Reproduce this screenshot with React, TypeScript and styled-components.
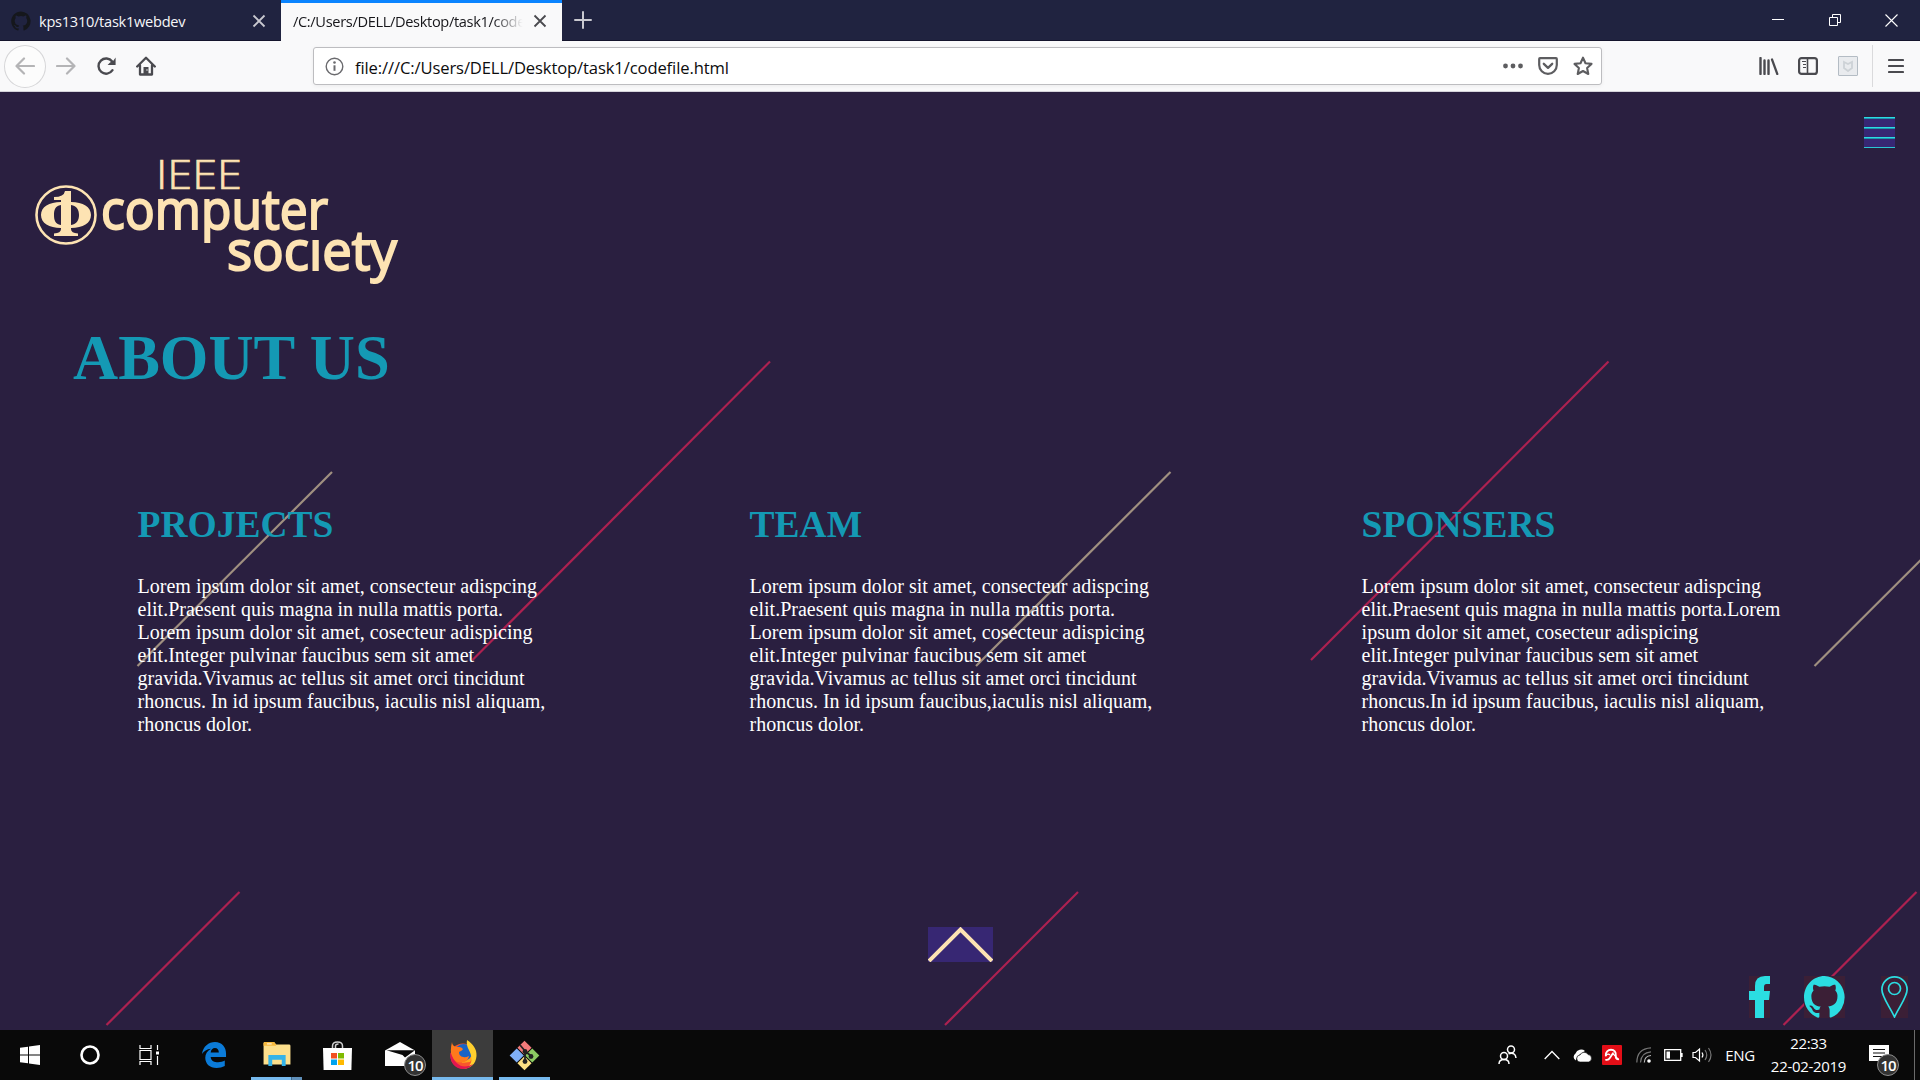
import React from "react";
import styled, { createGlobalStyle, css } from "styled-components";

const ui = `"Open Sans", "Noto Sans", sans-serif`;
const serif = `"Liberation Serif", "Times New Roman", serif`;

const Global = createGlobalStyle`
  * { box-sizing: border-box; }
  html, body { margin: 0; padding: 0; }
  body { width: 1920px; height: 1080px; overflow: hidden; background: #2a1f40; }
  svg { display: block; flex: none; }
`;

const Screen = styled.div`
  width: 1920px;
  height: 1080px;
  display: flex;
  flex-direction: column;
  font-family: ${ui};
`;

/* ---------- browser chrome ---------- */
const TabBar = styled.header`
  height: 41px;
  flex: none;
  display: flex;
  background: #202340;
  border-bottom: 1px solid #14142c;
`;

const Tab = styled.div<{ $active?: boolean }>`
  width: 281px;
  height: 41px;
  display: flex;
  align-items: center;
  padding: 0 15px 0 11px;
  font-size: 14.6px;
  color: #f6f6f8;
  ${(p) =>
    p.$active &&
    css`
      background: #f9f9fa;
      border-top: 3px solid #0a84ff;
      color: #16161a;
      padding-bottom: 3px;
      padding-left: 12px;
    `}
`;

const TabLabel = styled.span<{ $spacing: number; $fade?: boolean }>`
  flex: 1;
  overflow: hidden;
  white-space: nowrap;
  line-height: 22px;
  letter-spacing: ${(p) => p.$spacing}px;
  margin-left: ${(p) => (p.$fade ? 0 : 8)}px;
  margin-right: ${(p) => (p.$fade ? 8 : 0)}px;
  ${(p) =>
    p.$fade &&
    css`
      mask-image: linear-gradient(to right, #000 86%, transparent 99%);
    `}
`;

const NewTab = styled.div`
  display: flex;
  align-items: center;
  padding-left: 12px;
`;

const WindowButtons = styled.div`
  margin-left: auto;
  display: flex;
  align-items: center;
`;

const WindowButton = styled.div`
  width: 57px;
  height: 40px;
  display: flex;
  align-items: center;
  justify-content: center;
`;

const Toolbar = styled.div`
  height: 51px;
  flex: none;
  display: flex;
  align-items: center;
  background: #f9f9fa;
  border-bottom: 1px solid #d5d2da;
  padding: 0 13px 0 4px;
`;

const BackButton = styled.div`
  width: 42px;
  height: 43px;
  border: 1px solid #d6d6d8;
  border-radius: 50%;
  background: #fcfcfc;
  display: flex;
  align-items: center;
  justify-content: center;
`;

const NavIcons = styled.div`
  display: flex;
  align-items: center;
  gap: 20px;
  margin-left: 10px;
`;

const UrlBox = styled.div`
  width: 1289px;
  height: 38px;
  margin-left: 157px;
  border: 1px solid #bdbdc0;
  border-radius: 3px;
  background: #fff;
  box-shadow: 0 1px 4px rgba(0, 0, 0, 0.06);
  display: flex;
  align-items: center;
  padding: 0 8px 0 11px;
`;

const UrlText = styled.span`
  flex: 1;
  margin-left: 11px;
  font-size: 16.6px;
  letter-spacing: -0.12px;
  color: #0c0c0d;
  line-height: 24px;
  padding-top: 3px;
`;

const UrlActions = styled.div`
  display: flex;
  align-items: center;
  gap: 15px;
`;

const ToolbarEnd = styled.div`
  margin-left: auto;
  display: flex;
  align-items: center;
  gap: 19px;
`;

const Extension = styled.div`
  width: 20px;
  height: 20px;
  margin-left: 1px;
  border: 1px solid #b4bcc4;
  border-radius: 1px;
  background: #e9ebee;
  display: flex;
  align-items: center;
  justify-content: center;
`;

const AppMenu = styled.div`
  height: 42px;
  margin-left: -5px;
  padding: 0 3px 0 15px;
  border-left: 1px solid #dadadc;
  display: flex;
  align-items: center;
`;

/* ---------- page ---------- */
const Page = styled.main`
  position: relative;
  isolation: isolate;
  flex: 1;
  background: #2a1f40;
  display: flex;
  flex-direction: column;
`;

const Streaks = styled.svg`
  position: absolute;
  inset: 0;
  z-index: -1;
`;

const PageTop = styled.div`
  display: flex;
  justify-content: space-between;
  align-items: flex-start;
  padding: 25px 25px 0 35px;
  height: 198px;
`;

const Logo = styled.svg`
  margin-top: 42px;
  overflow: visible;
`;

const MenuButton = styled.div`
  width: 31px;
  height: 31px;
  background: #372773;
  display: flex;
  flex-direction: column;
  gap: 8px;
`;

const MenuBar = styled.div<{ $thin?: boolean }>`
  height: ${(p) => (p.$thin ? 1 : 2)}px;
  background: ${(p) => (p.$thin ? "#2bc6d2" : "linear-gradient(#2bdde2 50%, #1f95ae 50%)")};
`;

const Title = styled.h1`
  margin: 32px 0 0 73px;
  font: bold 62.5px/72px ${serif};
  color: #1499b4;
`;

const Columns = styled.section`
  display: grid;
  grid-template-columns: 612px 612px 1fr;
  padding-left: 137.6px;
  margin-top: 108px;
`;

const Column = styled.article`
  color: #fff;
  font: 20px/23px ${serif};
`;

const ColumnTitle = styled.h2`
  margin: 0;
  font: bold 37.5px/46px ${serif};
  color: #1499b4;
`;

const ColumnText = styled.p`
  margin: 27px 0 0;
  white-space: pre-line;
`;

const PageBottom = styled.div`
  margin-top: auto;
  display: grid;
  grid-template-columns: 928px 1fr auto;
  height: 103px;
  padding-right: 12px;
`;

const UpButton = styled.div`
  grid-column: 2;
  width: 65px;
  height: 35px;
  background: #372773;
`;

const Social = styled.div`
  display: flex;
  align-items: flex-start;
  margin-top: 49px;
`;

const SocialIcon = styled.div<{ $w: number; $gap: number }>`
  width: ${(p) => p.$w}px;
  height: 42px;
  margin-right: ${(p) => p.$gap}px;
  background: #3b1f36;
`;

/* ---------- taskbar ---------- */
const Taskbar = styled.footer`
  height: 50px;
  flex: none;
  display: flex;
  background: #090909;
  color: #fff;
`;

const TaskItem = styled.div<{ $w?: number; $active?: boolean; $line?: boolean }>`
  width: ${(p) => p.$w ?? 62}px;
  height: 50px;
  display: flex;
  align-items: center;
  justify-content: center;
  ${(p) => p.$active && "background: #3c3c3c;"}
  ${(p) => p.$line && "border-bottom: 3px solid #76b9ed; padding-top: 3px;"}
`;

const ExplorerItem = styled(TaskItem)`
  margin-left: 2px;
  border-image: linear-gradient(to right, #76b9ed 78%, #41678a 78%, #41678a 80%, #5f8fb9 80%) 1;
  border-style: solid;
  border-width: 0 0 3px;
`;

const MailItem = styled(TaskItem)`
  padding: 0 5px 2px 0;
`;

const Badged = styled.div`
  position: relative;
`;

const Badge = styled.span<{ $x: number; $y: number }>`
  position: absolute;
  left: ${(p) => p.$x}px;
  top: ${(p) => p.$y}px;
  width: 22px;
  height: 22px;
  border: 1px solid #8c8c8c;
  border-radius: 50%;
  background: #333;
  font-size: 15px;
  font-weight: 600;
  line-height: 20px;
  text-align: center;
  letter-spacing: -1px;
`;

const Tray = styled.div`
  margin-left: auto;
  display: flex;
  align-items: center;
`;

const TrayIcon = styled.div<{ $w: number }>`
  width: ${(p) => p.$w}px;
  display: flex;
  justify-content: center;
`;

const Language = styled.span`
  width: 58px;
  text-align: center;
  font-size: 15px;
  letter-spacing: -0.4px;
`;

const Clock = styled.div`
  width: 79px;
  font-size: 15px;
  line-height: 23px;
  text-align: center;
  letter-spacing: -0.3px;
  white-space: nowrap;
`;

const ShowDesktop = styled.div`
  width: 6px;
  height: 50px;
  margin-left: 4px;
  border-left: 1px solid #6a6a6a;
`;

const OCTOCAT =
  "M12 .5C5.4.5 0 5.8 0 12.5c0 5.3 3.4 9.8 8.2 11.4.6.1.8-.3.8-.6v-2.1c-3.3.7-4-1.6-4-1.6-.6-1.4-1.4-1.8-1.4-1.8-1-.7.1-.7.1-.7 1.2 0 1.9 1.2 1.9 1.2 1 1.8 2.8 1.3 3.500 1 0-.8.4-1.3.7-1.6-2.7-.3-5.500-1.3-5.500-6 0-1.2.5-2.3 1.3-3.1-.2-.4-.6-1.6 0-3.2 0 0 1-.3 3.4 1.2a11.500 11.500 0 0 1 6 0c2.3-1.5 3.3-1.2 3.3-1.2.6 1.6.2 2.8 0 3.2.9.8 1.3 1.9 1.3 3.2 0 4.6-2.8 5.6-5.500 5.9.5.4.9 1 .9 2.2v3.3c0 .3.1.7.8.6A12 12 0 0 0 12 .5z";

const CloseGlyph = ({ color }: { color: string }) => (
  <svg width="14" height="14" viewBox="0 0 14 14">
    <path d="M1.5 1.5l11 11M12.5 1.5l-11 11" stroke={color} strokeWidth="1.8" />
  </svg>
);

const columns = [
  {
    title: "PROJECTS",
    text: `Lorem ipsum dolor sit amet, consecteur adispcing
elit.Praesent quis magna in nulla mattis porta.
Lorem ipsum dolor sit amet, cosecteur adispicing
elit.Integer pulvinar faucibus sem sit amet
gravida.Vivamus ac tellus sit amet orci tincidunt
rhoncus. In id ipsum faucibus, iaculis nisl aliquam,
rhoncus dolor.`,
  },
  {
    title: "TEAM",
    text: `Lorem ipsum dolor sit amet, consecteur adispcing
elit.Praesent quis magna in nulla mattis porta.
Lorem ipsum dolor sit amet, cosecteur adispicing
elit.Integer pulvinar faucibus sem sit amet
gravida.Vivamus ac tellus sit amet orci tincidunt
rhoncus. In id ipsum faucibus,iaculis nisl aliquam,
rhoncus dolor.`,
  },
  {
    title: "SPONSERS",
    text: `Lorem ipsum dolor sit amet, consecteur adispcing
elit.Praesent quis magna in nulla mattis porta.Lorem
ipsum dolor sit amet, cosecteur adispicing
elit.Integer pulvinar faucibus sem sit amet
gravida.Vivamus ac tellus sit amet orci tincidunt
rhoncus.In id ipsum faucibus, iaculis nisl aliquam,
rhoncus dolor.`,
  },
];

function Chrome() {
  return (
    <>
      <TabBar>
        <Tab>
          <svg width="20" height="20" viewBox="0 0 24 24.5">
            <path d={OCTOCAT} fill="#15171c" />
          </svg>
          <TabLabel $spacing={-0.27}>kps1310/task1webdev</TabLabel>
          <CloseGlyph color="#c9c9d0" />
        </Tab>
        <Tab $active>
          <TabLabel $spacing={-0.34} $fade>
            /C:/Users/DELL/Desktop/task1/codefile.html
          </TabLabel>
          <CloseGlyph color="#4a4a4f" />
        </Tab>
        <NewTab>
          <svg width="18" height="18" viewBox="0 0 18 18">
            <path d="M9 1v16M1 9h16" stroke="#c9c9d0" strokeWidth="2" strokeLinecap="round" />
          </svg>
        </NewTab>
        <WindowButtons>
          <WindowButton>
            <svg width="12" height="12" viewBox="0 0 12 12">
              <path d="M0 5.5h12" stroke="#fff" />
            </svg>
          </WindowButton>
          <WindowButton>
            <svg width="12" height="12" viewBox="0 0 12 12">
              <path d="M.5 3.5h8v8h-8zM3.5 3.5v-3h8v8h-3" fill="none" stroke="#fff" />
            </svg>
          </WindowButton>
          <WindowButton>
            <svg width="13" height="13" viewBox="0 0 13 13">
              <path d="M.5 .5l12 12M12.5 .5l-12 12" stroke="#fff" strokeWidth="1.1" />
            </svg>
          </WindowButton>
        </WindowButtons>
      </TabBar>
      <Toolbar>
        <BackButton>
          <svg width="20" height="18" viewBox="0 0 20 18">
            <path d="M19 9H2M9 1.5L1.5 9l7.5 7.5" fill="none" stroke="#b4b4b6" strokeWidth="2.2" strokeLinecap="round" strokeLinejoin="round" />
          </svg>
        </BackButton>
        <NavIcons>
          <svg width="20" height="18" viewBox="0 0 20 18">
            <path d="M1 9h17M11 1.5L18.5 9 11 16.5" fill="none" stroke="#b4b4b6" strokeWidth="2.2" strokeLinecap="round" strokeLinejoin="round" />
          </svg>
          <svg width="20" height="20" viewBox="0 0 20 20">
            <path d="M16.5 14.2A7.600 7.600 0 1 1 16.2 5.500" fill="none" stroke="#4a4a4f" strokeWidth="2.4" strokeLinecap="round" />
            <path d="M19.6 1.500v7.500h-8l2.700-2.700 2.300-.5z" fill="#4a4a4f" />
          </svg>
          <svg width="20" height="20" viewBox="0 0 20 20">
            <path d="M1.200 10.500L10 1.700 18.800 10.500M4 9.500v9h12v-9" fill="none" stroke="#4a4a4f" strokeWidth="2.3" strokeLinecap="round" strokeLinejoin="round" />
            <path d="M7.500 18v-7h5v7z" fill="#4a4a4f" />
            <path d="M10.500 14h1" stroke="#f9f9fa" strokeWidth="1.500" />
          </svg>
        </NavIcons>
        <UrlBox>
          <svg width="19" height="19" viewBox="0 0 19 19">
            <circle cx="9.5" cy="9.5" r="8.3" fill="none" stroke="#6a6a6e" strokeWidth="1.4" />
            <path d="M9.5 8.300v5.500" stroke="#6a6a6e" strokeWidth="2" />
            <circle cx="9.5" cy="5.5" r="1.3" fill="#6a6a6e" />
          </svg>
          <UrlText>file:///C:/Users/DELL/Desktop/task1/codefile.html</UrlText>
          <UrlActions>
            <svg width="20" height="6" viewBox="0 0 20 6">
              <circle cx="2.5" cy="3" r="2.4" fill="#5d5d60" />
              <circle cx="10" cy="3" r="2.4" fill="#5d5d60" />
              <circle cx="17.5" cy="3" r="2.4" fill="#5d5d60" />
            </svg>
            <svg width="20" height="18" viewBox="0 0 20 18">
              <path d="M2 1.200h16q.8 0 .8.800v6a8.800 8.800 0 0 1-17.600 0V2q0-.8.8-.8z" fill="none" stroke="#5d5d60" strokeWidth="2.2" />
              <path d="M5.800 6.800L10 10.800l4.200-4" fill="none" stroke="#5d5d60" strokeWidth="2.3" strokeLinecap="round" strokeLinejoin="round" />
            </svg>
            <svg width="20" height="20" viewBox="0 0 20 20">
              <path d="M10 1.700l2.500 5.500 6 .7-4.400 4.100 1.200 6-5.300-3-5.300 3 1.200-6L1.500 7.900l6-.7z" fill="none" stroke="#5d5d60" strokeWidth="2.1" strokeLinejoin="round" />
            </svg>
          </UrlActions>
        </UrlBox>
        <ToolbarEnd>
          <svg width="20" height="18" viewBox="0 0 20 18">
            <path d="M1.5 1v16M5.5 3.5V17M9.5 3.5V17" stroke="#4a4a4f" strokeWidth="2.4" strokeLinecap="round" />
            <path d="M13 2.5L18.300 17" stroke="#4a4a4f" strokeWidth="2.2" strokeLinecap="round" />
          </svg>
          <svg width="20" height="18" viewBox="0 0 20 18">
            <rect x="1.1" y="1.1" width="17.8" height="15.8" rx="2.5" fill="none" stroke="#4a4a4f" strokeWidth="2.2" />
            <path d="M9.5 1v16" stroke="#4a4a4f" strokeWidth="1.6" />
            <path d="M4 4.5h4M5 7.5h3M5 10.5h3" stroke="#4a4a4f" strokeWidth="1.2" />
          </svg>
          <Extension>
            <svg width="12" height="12" viewBox="0 0 12 12">
              <path d="M2 2l4 2 4-2v6l-4 3-4-3z" fill="none" stroke="#cdd2d6" strokeWidth="1.8" />
            </svg>
          </Extension>
          <AppMenu>
            <svg width="16" height="16" viewBox="0 0 16 16">
              <path d="M1 2h14M1 8h14M1 14h14" stroke="#4a4a4f" strokeWidth="2.1" strokeLinecap="round" />
            </svg>
          </AppMenu>
        </ToolbarEnd>
      </Toolbar>
    </>
  );
}

function SocietyLogo() {
  const cream = "#fde3b3";
  return (
    <Logo width="364" height="126" viewBox="0 0 364 126" fill={cream}>
      <g fontFamily={ui} stroke={cream}>
        <text x="121" y="30" fontSize="41" fontWeight="300" strokeWidth="0.7" textLength="86" lengthAdjust="spacingAndGlyphs">IEEE</text>
        <text x="66" y="70" fontSize="55" fontWeight="400" strokeWidth="2" textLength="227" lengthAdjust="spacingAndGlyphs">computer</text>
        <text x="192" y="111" fontSize="55" fontWeight="400" strokeWidth="2" textLength="170" lengthAdjust="spacingAndGlyphs">socıety</text>
      </g>
      <ellipse cx="31" cy="56" rx="29.5" ry="28.5" fill="none" stroke={cream} strokeWidth="2.6" />
      <path d="M26 43C14 43 6 48 6 56s8 13 20 13z M36 43c12 0 20 5 20 13s-8 13-20 13z" />
      <path d="M26 46c-6 1-7 5-7 10s1 9 7 10zM36 46c6 1 8 5 8 10s-2 9-8 10z" fill="#2a1f40" />
      <path d="M19 38q10 0 11-6h6v38q0 4 7 4.500V77H19v-2.500q7-.5 7-4.500V41h-7z" />
    </Logo>
  );
}

function Content() {
  return (
    <Page>
      <Streaks width="1920" height="938" viewBox="0 92 1920 938" fill="none">
        {[0, 838.5, 1677].map((x) => (
          <g key={x} transform={`translate(${x} 0)`} strokeWidth="2.2">
            <path d="M137.500 666L332 472" stroke="#a09080" />
            <path d="M472.500 660L770 361.500" stroke="#ad2150" />
            <path d="M106.500 1025L239.500 892" stroke="#ad2150" />
          </g>
        ))}
      </Streaks>
      <PageTop>
        <SocietyLogo />
        <MenuButton>
          <MenuBar />
          <MenuBar />
          <MenuBar />
          <MenuBar $thin />
        </MenuButton>
      </PageTop>
      <Title>ABOUT US</Title>
      <Columns>
        {columns.map((c) => (
          <Column key={c.title}>
            <ColumnTitle>{c.title}</ColumnTitle>
            <ColumnText>{c.text}</ColumnText>
          </Column>
        ))}
      </Columns>
      <PageBottom>
        <UpButton>
          <svg width="65" height="35" viewBox="0 0 65 35">
            <path d="M1 34L32.5 2.500 64 34" fill="none" stroke="#fde3b3" strokeWidth="4" />
          </svg>
        </UpButton>
        <Social>
          <SocialIcon $w={21} $gap={34}>
            <svg width="21" height="42" viewBox="0 0 21 42">
              <path d="M6 42V24H0v-9h6V10Q6 0 16 0h5v8h-3.500Q15 8 15 11v4h6l-1 9h-5v18z" fill="#2bdde2" />
            </svg>
          </SocialIcon>
          <SocialIcon $w={41} $gap={36}>
            <svg width="41" height="42" viewBox="0 .5 24 23.6" preserveAspectRatio="none">
              <path d={OCTOCAT} fill="#2bdde2" />
            </svg>
          </SocialIcon>
          <SocialIcon $w={27} $gap={0}>
            <svg width="27" height="42" viewBox="0 0 27 42" fill="none" stroke="#2bdde2" strokeWidth="1.7">
              <path d="M13.5 41C9 31 .9 21 .9 13.500a12.600 12.600 0 0 1 25.200 0C26.100 21 18 31 13.500 41z" />
              <circle cx="13.5" cy="12.5" r="6" />
            </svg>
          </SocialIcon>
        </Social>
      </PageBottom>
    </Page>
  );
}

function Bottom() {
  return (
    <Taskbar>
      <TaskItem $w={60}>
        <svg width="20" height="20" viewBox="0 0 20 20" fill="#fff">
          <path d="M0 2.800l8-1.100v7.800H0zM9 1.500L20 0v9.500H9zM0 10.500h8v7.800l-8-1.100zM9 10.500h11V20L9 18.500z" />
        </svg>
      </TaskItem>
      <TaskItem $w={60}>
        <svg width="20" height="20" viewBox="0 0 20 20">
          <circle cx="10" cy="10" r="8.5" fill="none" stroke="#fff" strokeWidth="2.6" />
        </svg>
      </TaskItem>
      <TaskItem $w={59}>
        <svg width="21" height="20" viewBox="0 0 21 20" fill="none" stroke="#fff" strokeWidth="1.2">
          <path d="M1 0v3.500h11V0M1 5.500h11v9H1zM1 20v-3.500h11V20M18.500 0v5M18.500 11v9" />
          <path d="M17 6.500h3v3h-3z" fill="#fff" stroke="none" />
        </svg>
      </TaskItem>
      <TaskItem $w={70}>
        <svg width="25" height="26" viewBox="0 0 26 27">
          <path d="M0 12.500C1 4.500 7 0 13.500 0 21 0 25 5.500 25 12v3.500H9c.3 4 4 5.600 7.700 5.600 2.700 0 5-.6 7-1.800V25c-2.500 1.400-5.400 2-8.500 2C8 27 3.400 22.500 3.400 16.300c0-4 2.200-7.300 6-9.300C5 7.300 2 9.500 0 12.500zM9 10.800h8.500C17.400 8 16 6.300 13.500 6.300S9.400 8 9 10.800z" fill="#0b7bd8" />
        </svg>
      </TaskItem>
      <ExplorerItem $w={51}>
        <svg width="28" height="24" viewBox="0 0 28 25">
          <path d="M0 1.500Q0 0 1.500 0H11l2 2.500h13.500Q28 2.500 28 4v19.500H0z" fill="#fddf8c" />
          <path d="M1.500 0H11l2 2.500V4H0V1.500Q0 0 1.500 0z" fill="#f7b93e" />
          <path d="M3.500 2h5" stroke="#fff" />
          <path d="M5 25V13.500h18V25h-4v-6.500H9V25z" fill="#35b3e8" />
        </svg>
      </ExplorerItem>
      <TaskItem $w={71}>
        <svg width="29" height="29" viewBox="0 0 29 29">
          <path d="M9.500 7.500V5q0-4 5-4t5 4v2.500M12.500 7.500V5q0-2 3-2" fill="none" stroke="#cfcfcf" strokeWidth="1.5" />
          <path d="M0 7h29l-.6 22H.6z" fill="#fff" />
          <path d="M8 12h6v5.500H8z" fill="#f25022" />
          <path d="M15 12h6v5.500h-6z" fill="#7fba00" />
          <path d="M8 18.500h6V24H8z" fill="#00a4ef" />
          <path d="M15 18.500h6V24h-6z" fill="#ffb900" />
        </svg>
      </TaskItem>
      <MailItem $w={59}>
        <Badged>
          <svg width="30" height="24" viewBox="0 0 30 24">
            <path d="M0 8.500L15 0l15 8.500V24H0z" fill="#fff" />
            <path d="M1.500 8.200h28.500L20 15.500 17.500 13z" fill="#090909" />
          </svg>
          <Badge $x={19} $y={12}>10</Badge>
        </Badged>
      </MailItem>
      <TaskItem $w={61} $active $line>
        <svg width="28" height="30" viewBox="0 0 28 30">
          <circle cx="14" cy="16" r="12.5" fill="#f9562c" />
          <path d="M13 5a10 10 0 0 1 8 17l-8 1z" fill="#ffa320" />
          <circle cx="14.5" cy="12.5" r="8.5" fill="#1763c6" />
          <path d="M18 0c6 4 10 9 9.500 16C27 24 21 29 13.500 29c6-1 9-5 9-10 0-8-6-11-4.500-19z" fill="#ffcf2e" />
          <path d="M3 2c0 3 2 4.500 5 5 3 0 4 0 6 2-1 2-3 2.500-4 3 0 5 5 6.500 10 4-1 5-5 7-9 6.500C3 22 0 14 3 2z" fill="#ff7a1c" />
          <path d="M1.500 12C0 22 6 29 14 29c4 0 8-2 10-5-8 5-18 3-22.500-12z" fill="#e3174f" />
        </svg>
      </TaskItem>
      <TaskItem $w={6} />
      <TaskItem $w={51} $line>
        <svg width="31" height="31" viewBox="0 0 31 31">
          <g transform="rotate(45 15.500 15.500)">
            <path d="M5 5h10v10H5z" fill="#f27b7b" />
            <path d="M16 5h10v10H16z" fill="#8ccb63" />
            <path d="M5 16h10v10H5z" fill="#7fb0f8" />
            <path d="M16 16h10v10H16z" fill="#fbdf84" />
          </g>
          <path d="M11 5l5 6v11M16 11l6 5" fill="none" stroke="#222" strokeWidth="1.8" />
          <g fill="#222">
            <circle cx="16" cy="11.5" r="2.4" />
            <circle cx="22" cy="16.5" r="2.4" />
            <circle cx="16" cy="21.5" r="2.4" />
          </g>
        </svg>
      </TaskItem>
      <Tray>
        <TrayIcon $w={46}>
          <svg width="19" height="20" viewBox="0 0 19 20" fill="none" stroke="#fff" strokeWidth="1.5">
            <circle cx="13" cy="4.5" r="3.5" />
            <circle cx="6" cy="11" r="3.5" />
            <path d="M1 19q0-4.500 5-4.500t5 4.500M10.500 8.800q7-2 7.500 4.200" />
          </svg>
        </TrayIcon>
        <TrayIcon $w={44}>
          <svg width="16" height="10" viewBox="0 0 16 10">
            <path d="M.7 9L8 1.500 15.300 9" fill="none" stroke="#fff" strokeWidth="1.3" />
          </svg>
        </TrayIcon>
        <TrayIcon $w={16}>
          <svg width="20" height="13" viewBox="0 0 20 13" fill="#fff">
            <path d="M4 11.500a4 4 0 0 1-.5-7A6 6 0 0 1 13 2L7 6q-3 2-3 5.500z" />
            <path d="M8.500 13a3.500 3.500 0 0 1-.5-7 4.500 4.500 0 0 1 8-.5A3.800 3.800 0 0 1 16.500 13z" stroke="#090909" strokeWidth=".6" />
          </svg>
        </TrayIcon>
        <TrayIcon $w={44}>
          <svg width="20" height="20" viewBox="0 0 20 20">
            <rect width="20" height="20" rx="1" fill="#e30e17" />
            <path d="M4 14.800q2.500.5 4-2l3-4.500" fill="none" stroke="#fff" strokeWidth="1.8" strokeLinecap="round" />
            <path d="M3.800 10.500C3.500 7 6 4.800 9 4.800c3.500 0 5 2.200 4.700 5.200-.2 2.500.8 4 2.500 4.300" fill="none" stroke="#fff" strokeWidth="1.9" strokeLinecap="round" />
            <path d="M4 10.500q2-2.500 4-.5M10.500 9.500q1.500-.5 2.500 1.500" fill="none" stroke="#fff" strokeWidth="1.3" />
          </svg>
        </TrayIcon>
        <TrayIcon $w={18}>
          <svg width="15" height="16" viewBox="0 0 15 16" fill="none" strokeWidth="1.2">
            <path d="M.8 15.500Q1 1.500 15 .8M4.500 15.500Q5 5.500 15 4.800" stroke="#777" />
            <path d="M8.300 15.500Q8.500 9 15 8.500" stroke="#bbb" />
            <circle cx="13" cy="14" r="1.8" fill="#fff" />
          </svg>
        </TrayIcon>
        <TrayIcon $w={42}>
          <svg width="19" height="12" viewBox="0 0 19 12">
            <path d="M.7.700h16v10.600H.7zM18 4v4" fill="none" stroke="#fff" strokeWidth="1.3" />
            <path d="M2.500 2.500h3.500v7H2.500z" fill="#fff" />
          </svg>
        </TrayIcon>
        <TrayIcon $w={17}>
          <svg width="21" height="16" viewBox="0 0 21 16" fill="none" strokeWidth="1.2">
            <path d="M1 5.500h2.500L7.500 2v12L3.500 10.500H1z" stroke="#fff" />
            <path d="M10 5.500q1.800 2.500 0 5" stroke="#fff" />
            <path d="M13 3q3.500 5 0 10M16.500 1q5 7 0 14" stroke="#777" />
          </svg>
        </TrayIcon>
        <Language>ENG</Language>
        <Clock>
          22:33
          <br />
          22-02-2019
        </Clock>
        <TrayIcon $w={62}>
          <Badged>
            <svg width="20" height="20" viewBox="0 0 20 20">
              <path d="M0 0h20v16h-7l-3.500 3.500V16H0z" fill="#fff" />
              <path d="M4 4.500h12M4 8h12M4 11.500h9" stroke="#111" strokeWidth="1.2" />
            </svg>
            <Badge $x={8} $y={9}>10</Badge>
          </Badged>
        </TrayIcon>
        <ShowDesktop />
      </Tray>
    </Taskbar>
  );
}

export default function App() {
  return (
    <Screen>
      <Global />
      <Chrome />
      <Content />
      <Bottom />
    </Screen>
  );
}
